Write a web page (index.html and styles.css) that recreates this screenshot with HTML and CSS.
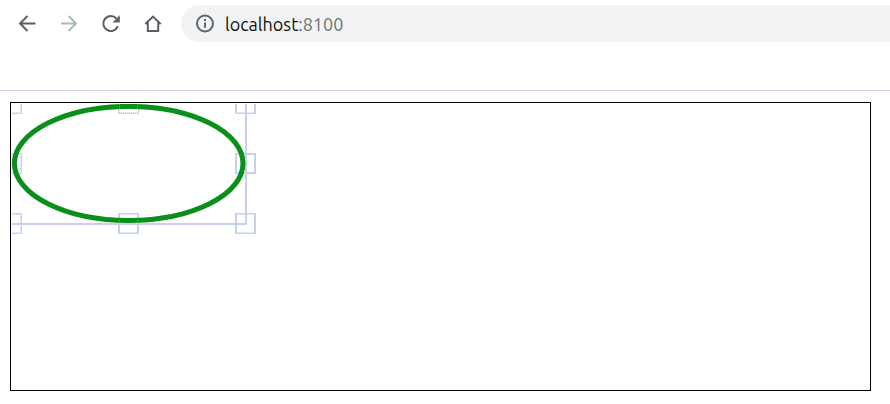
FILE: index.html
```html
<!DOCTYPE html>
<html lang="en">
<head>
<meta charset="utf-8">
<meta name="viewport" content="width=device-width, initial-scale=1">
<title>localhost:8100</title>
<link rel="stylesheet" href="styles.css">
</head>
<body>
<header class="toolbar">
  <nav class="nav" aria-label="Browser">
    <button class="nav-button" type="button" aria-label="Back">
      <svg class="icon" viewBox="0 0 20 20"><path d="M18.500 9.500H3M10.500 2L3 9.500l7.500 7.500"/></svg>
    </button>
    <button class="nav-button nav-button-muted" type="button" aria-label="Forward">
      <svg class="icon" viewBox="0 0 20 20"><path d="M2 9.500H17M9.500 2L17 9.500l-7.500 7.500"/></svg>
    </button>
    <button class="nav-button" type="button" aria-label="Reload">
      <svg class="icon" viewBox="0 0 20 20"><path d="M16.800 12.200A7.500 7.500 0 1 1 15.400 4.500"/><path class="solid" d="M18.800 1.300v7.200h-7.300z"/></svg>
    </button>
    <button class="nav-button" type="button" aria-label="Home">
      <svg class="icon" viewBox="0 0 20 20"><path d="M2.300 10L10 2.600l7.700 7.400M4.800 8.500V17h10.400V8.500"/></svg>
    </button>
  </nav>
  <div class="address">
    <svg class="icon icon-info" viewBox="0 0 20 20"><circle cx="10" cy="9.500" r="8"/><path d="M10 8.500v5.200M10 5.100v2"/></svg>
    <div class="url" role="textbox" contenteditable="true" spellcheck="false" aria-label="Address">localhost<span class="port">:8100</span></div>
  </div>
</header>
<main class="stage">
  <svg class="drawing" width="246" height="132" viewBox="0 0 246 132" role="img" aria-label="Selected ellipse">
    <path class="bounds" d="M0 120H234V0"/>
    <path class="bounds" d="M224 0V9M243 0V10M224 50H243V69H224zM224 110V129M243 109V130M126 110V129M107 110V129"/>
    <g class="handles">
      <path d="M0 9.500H9.500V0M106.500 0V9.500H126.500V0M223.500 9.500H243.500"/>
      <path d="M0 49.500H9.500V69.500H0M106.500 109.500H126.500V129.500H106.500z"/>
      <path d="M0 109.500H9.500V129.500H0M223.500 109.500H243.500V129.500H223.500z"/>
    </g>
    <g class="handles handles-dotted">
      <path d="M0 8.500H8.500V0M107.500 0V8.500H125.500V0M224.500 8.500H242.500"/>
      <path d="M0 50.500H8.500V68.500H0M107.500 110.500H125.500M107.500 128.500H125.500"/>
      <path d="M0 110.500H8.500V128.500H0M224.500 110.500H242.500M224.500 128.500H242.500"/>
    </g>
    <ellipse class="shape" cx="116.700" cy="59.400" rx="114.300" ry="57"/>
    <path class="dots" d="M107.500 119V116M125.500 119V116M107.500 0V5M125.500 0V5"/>
  </svg>
</main>
</body>
</html>
```
FILE: styles.css
```css
* {
  box-sizing: border-box;
}

body {
  display: flex;
  flex-direction: column;
  min-height: 100vh;
  margin: 0;
  background: #fff;
  font-family: Ubuntu, "Noto Sans", sans-serif;
}

.toolbar {
  display: flex;
  align-items: flex-start;
  gap: 8px;
  padding: 5px 0 48px 7px;
  border-bottom: 1px solid #c9d3ee;
}

.nav {
  display: flex;
  gap: 2px;
}

.nav-button {
  display: grid;
  place-items: center;
  width: 40px;
  height: 37px;
  padding: 0;
  border: 0;
  background: none;
  color: #5f5c66;
}

.nav-button-muted {
  color: #a5bdb2;
}

.icon {
  width: 20px;
  height: 20px;
  fill: none;
  stroke: currentColor;
  stroke-width: 2;
}

.icon .solid {
  fill: currentColor;
  stroke: none;
}

.icon-info {
  flex: none;
  color: #5f6368;
}

.address {
  display: flex;
  flex: 1;
  align-items: center;
  gap: 10px;
  height: 37px;
  padding-left: 14px;
  border-radius: 19px 0 0 19px;
  background: #f1f3f4;
}

.url {
  flex: 1;
  color: #111;
  font-size: 18px;
  line-height: 24px;
  outline: none;
}

.port {
  color: #6b7376;
}

.stage {
  flex: 1;
  margin: 11px 19px 13px 10px;
  padding: 1px;
  border: 1px solid #000;
}

.drawing {
  display: block;
  fill: none;
}

.bounds {
  stroke: #c9d0ee;
  stroke-width: 2;
}

.handles {
  stroke: #c9d0ee;
}

.handles-dotted {
  stroke-dasharray: 1 1;
}

.shape {
  stroke: #08901a;
  stroke-width: 5;
}

.dots {
  stroke: #5fae7c;
  stroke-dasharray: 1 1;
}
```
